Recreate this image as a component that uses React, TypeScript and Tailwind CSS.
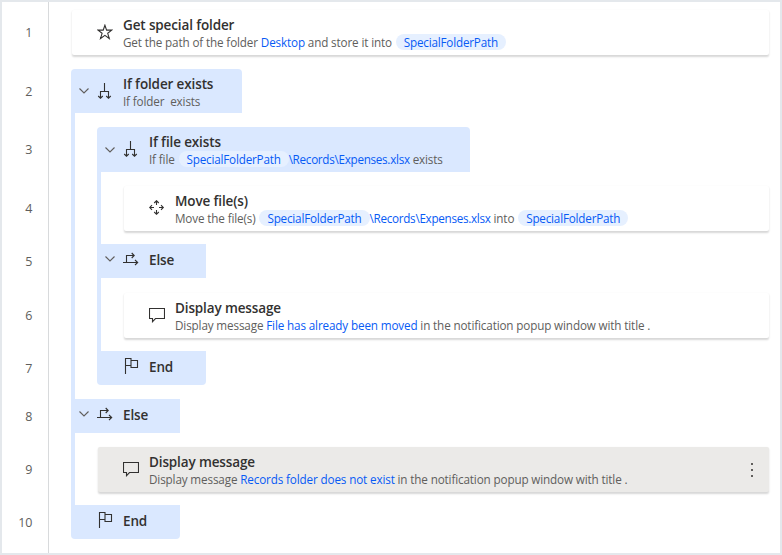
import type { ReactNode } from "react";

type IconName = "star" | "branch" | "move" | "else" | "message" | "flag";

const paths: Record<IconName, string> = {
  star: "M7.9 1.2 L9.6 6.1 H14.8 L10.7 9.3 L12.3 14.5 L7.9 11.4 L3.5 14.5 L5.1 9.3 L1 6.1 H6.2 Z",
  branch: "M7.5 0 V8.5 M3.5 15 V8.5 H11.5 V15 M1.2 13 L3.5 15.2 L5.8 13 M9.2 13 L11.5 15.2 L13.8 13",
  move: "M7.5 0.8 V5 M5.2 3 L7.5 0.7 L9.8 3 M7.5 10 V14.2 M5.2 12 L7.5 14.3 L9.8 12 M0.8 7.5 H5 M3 5.2 L0.7 7.5 L3 9.8 M10 7.5 H14.2 M12 5.2 L14.3 7.5 L12 9.8",
  else: "M0 11.5 H14.5 M12 9 L14.7 11.5 L12 14 M3.5 11.5 V4.5 H11 M8.7 2 L11.2 4.5 L8.7 7",
  message: "M0.5 1.5 H15.5 V11.5 H6.5 L3.5 14.7 V11.5 H0.5 Z",
  flag: "M2.5 16 V0.5 H8 V7.5 H2.5 M8 2.5 H14.5 V9.5 H8 V7.5",
};

function Icon({ name }: { name: IconName }) {
  return (
    <svg className="size-4 shrink-0" viewBox="0 0 16 16" fill="none" stroke="#323130" strokeWidth="1.1">
      <path d={paths[name]} />
    </svg>
  );
}

function Chevron() {
  return (
    <svg className="h-3 w-2.5 shrink-0" viewBox="0 0 10 12" fill="none" stroke="#605e5c" strokeWidth="1.1">
      <path d="M0.5 3.5 L5 8 L9.5 3.5" />
    </svg>
  );
}

function Title({ children }: { children: ReactNode }) {
  return (
    <div className="h-[18px] text-[13.5px] leading-[18px] font-semibold tracking-[-0.13px] text-[#323130]">{children}</div>
  );
}

function Desc({ children }: { children: ReactNode }) {
  return (
    <div className="h-[17px] text-[11.7px] leading-[16px] tracking-[-0.14px] whitespace-pre text-[#605e5c]">{children}</div>
  );
}

function Value({ children }: { children: ReactNode }) {
  return <span className="text-[#075af5]">{children}</span>;
}

function RecordsPath() {
  return <span className="tracking-[-0.29px] text-[#075af5]">\Records\Expenses.xlsx</span>;
}

function Pill() {
  return (
    <span className="ml-px inline-block h-4 rounded-full bg-[#e6f0ff] px-2 leading-4 tracking-[-0.2px] text-[#075af5]">
      SpecialFolderPath
    </span>
  );
}

function Card({ icon, title, selected, children }: { icon: IconName; title: string; selected?: boolean; children: ReactNode }) {
  return (
    <div
      className={`flex h-[45px] w-full items-center rounded-[2px] pr-4 pl-[25px] shadow-[0_1.5px_2px_rgba(0,0,0,0.16)] ${selected ? "bg-[#ebeae8]" : "bg-white"}`}
    >
      <div className="mb-px"><Icon name={icon} /></div>
      <div className="ml-2.5 grow pt-px">
        <Title>{title}</Title>
        <Desc>{children}</Desc>
      </div>
      {selected && (
        <div className="flex flex-col gap-1">
          <i className="size-0.5 bg-[#605e5c]" />
          <i className="size-0.5 bg-[#605e5c]" />
          <i className="size-0.5 bg-[#605e5c]" />
        </div>
      )}
    </div>
  );
}

function Marker({ kind }: { kind: "Else" | "End" }) {
  return (
    <div className={`flex h-[34px] w-[109px] bg-[#dae8ff] pl-2 ${kind === "End" ? "rounded-b-[4px]" : ""}`}>
      <div className="flex h-[30px] items-center">{kind === "Else" ? <Chevron /> : <div className="w-2.5" />}</div>
      <div className="ml-2 flex h-[30px] items-center">
        <Icon name={kind === "Else" ? "else" : "flag"} />
      </div>
      <div className="ml-2.5 pt-[7px]">
        <Title>{kind}</Title>
      </div>
    </div>
  );
}

const lines = [
  "mt-[21px]", "mt-[39px]", "mt-[38px]", "mt-[39px]", "mt-[33px]",
  "mt-[34px]", "mt-[33px]", "mt-[28px]", "mt-[33px]", "mt-[33px]",
];

export default function App() {
  return (
    <div className="flex h-[555px] w-[782px] overflow-hidden border-2 border-[#e4e8ec] bg-white font-['Open_Sans','Noto_Sans',sans-serif]">
      <div className="w-[47px] shrink-0 border-r border-[#d8dadc] pr-4 text-right text-[12.5px] leading-5 tracking-[-0.3px] text-[#605e5c]">
        {lines.map((margin, i) => (
          <div key={i} className={margin}>{i + 1}</div>
        ))}
      </div>
      <div className="w-[720px] shrink-0 pt-2 pl-[22px]">
        <div className="pl-px">
          <Card icon="star" title="Get special folder">
            Get the path of the folder <Value>Desktop</Value> and store it into <Pill />
          </Card>
        </div>
        <section className="mt-3.5 rounded-l-[4px] bg-[#dae8ff]">
          <div className="flex h-11 bg-white">
            <div className="flex h-11 w-[171px] items-center rounded-t-[4px] bg-[#dae8ff] pl-2">
              <Chevron />
              <div className="ml-2"><Icon name="branch" /></div>
              <div className="ml-2.5 pt-0.5">
                <Title>If folder exists</Title>
                <Desc>If folder  exists</Desc>
              </div>
            </div>
          </div>
          <div className="ml-1 bg-white py-3.5 pl-[22px]">
            <section className="rounded-l-[4px] bg-[#dae8ff]">
              <div className="flex h-[45px] bg-white">
                <div className="flex h-[45px] w-[373px] items-center rounded-t-[4px] bg-[#dae8ff] pl-2">
                  <Chevron />
                  <div className="mb-px ml-2"><Icon name="branch" /></div>
                  <div className="ml-2.5 pt-px">
                    <Title>If file exists</Title>
                    <Desc>If file <Pill /><RecordsPath /> exists</Desc>
                  </div>
                </div>
              </div>
              <div className="ml-1 bg-white pt-3.5 pb-[13px] pl-[23px]">
                <Card icon="move" title="Move file(s)">
                  Move the file(s) <Pill /><RecordsPath /> into <Pill />
                </Card>
              </div>
              <div className="bg-white"><Marker kind="Else" /></div>
              <div className="ml-1 bg-white pt-[15px] pb-[13px] pl-[23px]">
                <Card icon="message" title="Display message">
                  Display message <Value>File has already been moved</Value> in the notification popup window with title .
                </Card>
              </div>
              <div className="bg-white"><Marker kind="End" /></div>
            </section>
          </div>
          <div className="bg-white"><Marker kind="Else" /></div>
          <div className="ml-1 bg-white pt-3.5 pb-[13px] pl-[23px]">
            <Card icon="message" title="Display message" selected>
              Display message <Value>Records folder does not exist</Value> in the notification popup window with title .
            </Card>
          </div>
          <div className="bg-white"><Marker kind="End" /></div>
        </section>
      </div>
    </div>
  );
}
